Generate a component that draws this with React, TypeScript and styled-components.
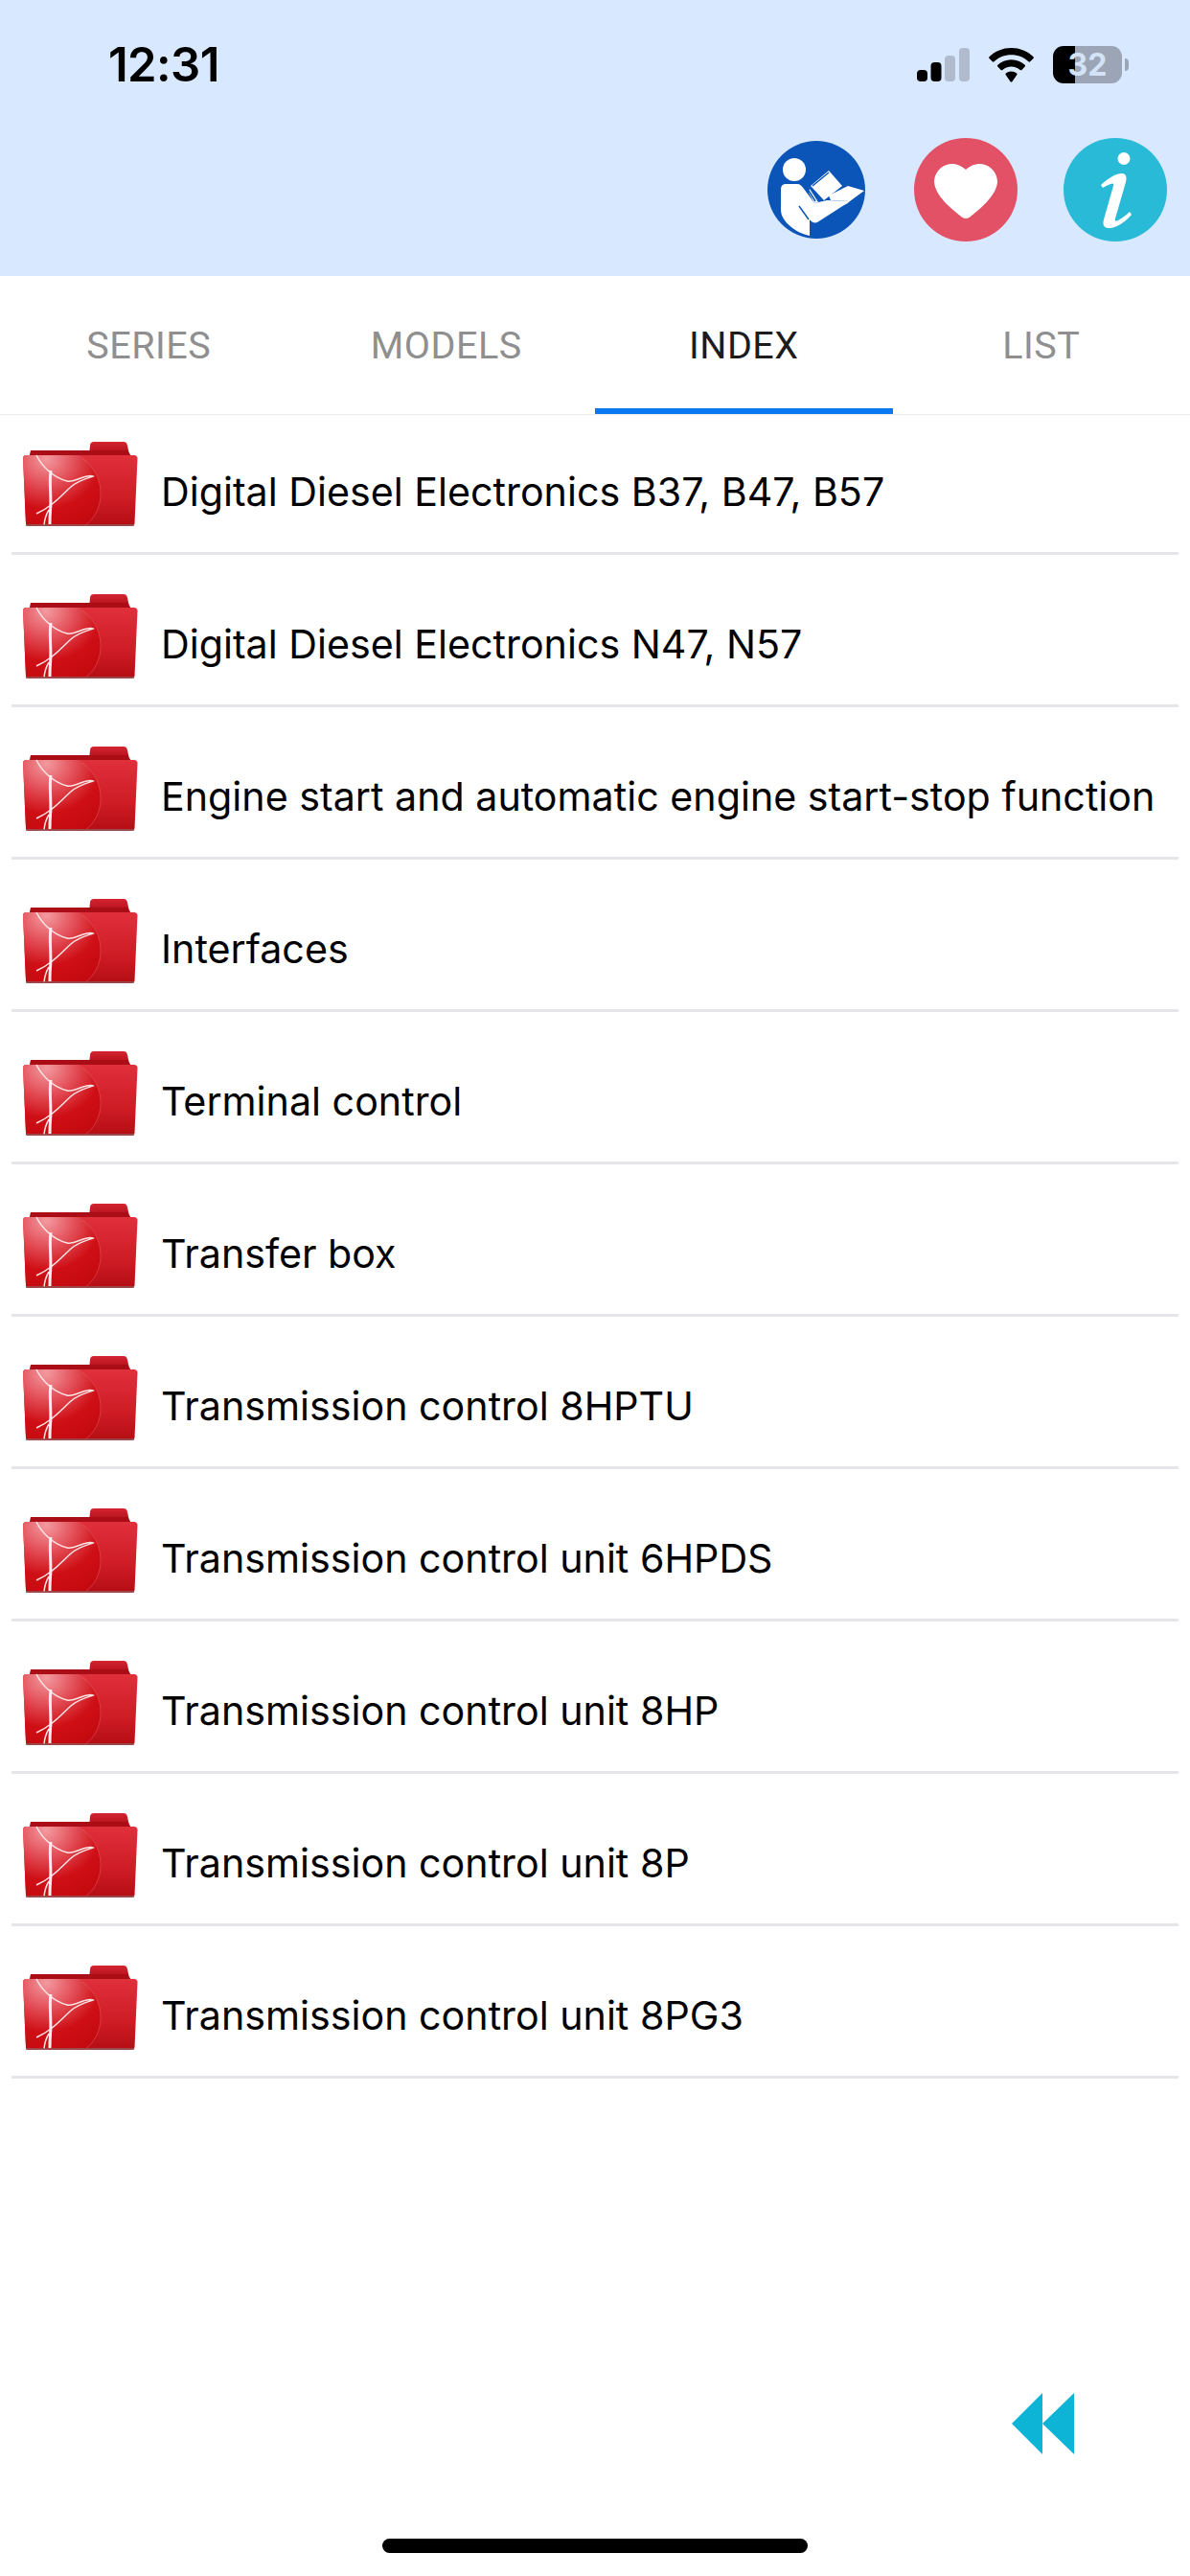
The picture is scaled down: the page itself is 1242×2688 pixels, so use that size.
import { createGlobalStyle } from "styled-components";
import styled from "styled-components";

const GlobalStyle = createGlobalStyle`
  * { box-sizing: border-box; }
  html, body { margin: 0; padding: 0; background: #fff; }
`;

const Page = styled.div`
  width: 1242px;
  height: 2688px;
  display: flex;
  flex-direction: column;
  background: #fff;
  font-family: Inter, "Liberation Sans", sans-serif;
  overflow: hidden;
`;

const Header = styled.header`
  height: 288px;
  flex: none;
  background: #d8e9ff;
  display: flex;
  flex-direction: column;
`;

const StatusBar = styled.div`
  display: flex;
  align-items: flex-start;
  justify-content: space-between;
  padding: 48px 64px 0 113px;
  height: 144px;
`;

const Clock = styled.span`
  font-size: 49px;
  line-height: 40px;
  font-weight: 600;
  letter-spacing: -0.6px;
  color: #000;
`;

const StatusIcons = styled.div`
  display: flex;
  align-items: center;
  height: 39px;
`;

const Battery = styled.div`
  width: 72px;
  height: 39px;
  margin-left: 20px;
  border-radius: 11px;
  background: linear-gradient(90deg, #000 32%, #9ba5b5 32%);
  color: #d3e2f6;
  font-size: 32px;
  font-weight: 700;
  line-height: 39px;
  text-align: center;
  font-family: Inter, sans-serif;
`;

const BatteryNub = styled.div`
  width: 4px;
  height: 13px;
  margin-left: 3px;
  border-radius: 0 4px 4px 0;
  background: #9ba5b5;
`;

const Actions = styled.div`
  display: flex;
  justify-content: flex-end;
  align-items: center;
  height: 108px;
  padding-right: 24px;
`;

const RoundIcon = styled.svg<{ $ml: number }>`
  display: block;
  margin-left: ${(p) => p.$ml}px;
`;

const Tabs = styled.nav`
  display: flex;
  height: 145px;
  flex: none;
  border-bottom: 1px solid #ececec;
`;

const Tab = styled.div<{ $active?: boolean }>`
  flex: 1;
  display: flex;
  align-items: center;
  justify-content: center;
  padding-top: 6px;
  font-family: Roboto, sans-serif;
  font-size: 39.5px;
  letter-spacing: 0.5px;
  color: ${(p) => (p.$active ? "#1c1c1c" : "#8f8f8f")};
  border-bottom: 6px solid ${(p) => (p.$active ? "#0a78f0" : "transparent")};
`;

const List = styled.ul`
  list-style: none;
  margin: 0;
  padding: 0 12px;
  flex: 1;
`;

const Row = styled.li`
  height: 159px;
  display: flex;
  align-items: flex-end;
  gap: 24px;
  padding: 0 0 26px 12px;
  border-bottom: 3px solid #e5e5ea;
  &:first-child {
    height: 146px;
  }
`;

const RowLabel = styled.span`
  font-size: 41.2px;
  line-height: 50px;
  margin-bottom: 12px;
  color: #000;
  white-space: nowrap;
`;

const Footer = styled.div`
  height: 199px;
  flex: none;
  display: flex;
  flex-direction: column;
  align-items: center;
`;

const BackRow = styled.div`
  width: 100%;
  display: flex;
  justify-content: flex-end;
  padding-right: 121px;
  padding-top: 8px;
`;

const HomeBar = styled.div`
  width: 444px;
  height: 15px;
  margin-top: 88px;
  border-radius: 8px;
  background: #000;
`;

const ITEMS = [
  "Digital Diesel Electronics B37, B47, B57",
  "Digital Diesel Electronics N47, N57",
  "Engine start and automatic engine start-stop function",
  "Interfaces",
  "Terminal control",
  "Transfer box",
  "Transmission control 8HPTU",
  "Transmission control unit 6HPDS",
  "Transmission control unit 8HP",
  "Transmission control unit 8P",
  "Transmission control unit 8PG3",
];

const TABS = ["SERIES", "MODELS", "INDEX", "LIST"];

function SignalIcon() {
  return (
    <svg width="55" height="35" viewBox="0 0 55 35">
      <rect x="0" y="23" width="11" height="12" rx="4" fill="#000" />
      <rect x="14.500" y="15" width="11" height="20" rx="4" fill="#000" />
      <rect x="29" y="8" width="11" height="27" rx="4" fill="#b0bccd" />
      <rect x="44" y="0" width="11" height="35" rx="4" fill="#b0bccd" />
    </svg>
  );
}

function WifiIcon() {
  return (
    <svg width="47" height="36" viewBox="0 0 47 36" style={{ marginLeft: 20 }}>
      <path
        d="M23.500 0C14.500 0 6.500 3.400 0.500 9.200C0 9.700 0 10.400 0.500 10.900L3.800 14.300C4.300 14.800 5 14.800 5.500 14.300C10.300 9.800 16.500 7.200 23.500 7.200C30.500 7.200 36.700 9.800 41.500 14.300C42 14.800 42.700 14.800 43.200 14.300L46.500 10.900C47 10.400 47 9.700 46.500 9.200C40.500 3.400 32.500 0 23.500 0Z"
        fill="#000"
      />
      <path
        d="M23.500 12.200C18 12.200 13 14.300 9.300 17.800C8.800 18.300 8.800 19 9.300 19.500L12.600 22.900C13.100 23.400 13.800 23.400 14.300 22.900C16.800 20.700 20 19.400 23.500 19.400C27 19.400 30.200 20.700 32.700 22.900C33.200 23.400 33.900 23.400 34.400 22.900L37.700 19.500C38.200 19 38.200 18.300 37.700 17.800C34 14.300 29 12.200 23.500 12.200Z"
        fill="#000"
      />
      <path
        d="M23.500 24.500C21.300 24.500 19.300 25.300 17.800 26.600C17.300 27.100 17.300 27.800 17.800 28.300L22.600 35.300C23.100 35.900 23.900 35.900 24.400 35.300L29.200 28.300C29.700 27.800 29.700 27.100 29.200 26.600C27.700 25.300 25.700 24.500 23.500 24.500Z"
        fill="#000"
      />
    </svg>
  );
}

function ReaderIcon() {
  return (
    <RoundIcon $ml={0} width="102" height="102" viewBox="0 0 102 102">
      <circle cx="51" cy="51" r="51" fill="#0b55b8" />
      <circle cx="28" cy="30" r="12" fill="#fff" />
      <path
        d="M19 45H31C34 45 36 47 38 50L49 65L62 62L86 63C84 65 82 66 80 67L52 85C49 86 46 85 44 82V99C34 97 24 91 18 83C15 79 14 75 14 72V51C14 47 16 45 19 45Z"
        fill="#fff"
      />
      <path d="M64 57L84 47L101 52L86 63L66 62Z" fill="#fff" />
      <path d="M33 68L43 82" stroke="#0b55b8" strokeWidth="1.500" fill="none" />
      <path d="M45 47L64 31L78 47L59 62Z" fill="#fff" />
      <path d="M47 47L64 33" stroke="#0b55b8" strokeWidth="1.500" fill="none" />
      <path d="M44 50L53 64L49 65L43 54Z" fill="#fff" />
      <path d="M43 52L50 63" stroke="#0b55b8" strokeWidth="1.500" fill="none" />
    </RoundIcon>
  );
}

function HeartIcon() {
  return (
    <RoundIcon $ml={51} width="108" height="108" viewBox="0 0 108 108">
      <circle cx="54" cy="54" r="54" fill="#e25165" />
      <path
        d="M54 33C47 27 40 26 34 28C25 31 21 39 21 46C22 60 39 74 48 81C52 85 56 85 60 81C69 74 86 60 87 46C87 39 83 31 74 28C68 26 61 27 54 33Z"
        fill="#fff"
      />
    </RoundIcon>
  );
}

function InfoIcon() {
  return (
    <RoundIcon $ml={48} width="108" height="108" viewBox="0 0 108 108">
      <circle cx="54" cy="54" r="54" fill="#29bad8" />
      <circle cx="63" cy="21.500" r="6.500" fill="#fff" />
      <path
        d="M39 49C46 42 56 36 62 37C66 38 66 42 65 46L54 84C53 87 55 87 57 86C62 83 66 80 69 77L71 80C65 87 55 95 46 94C41 93 41 89 42 85L52 50C53 47 51 47 49 48C46 49 43 51 41 52Z"
        fill="#fff"
      />
    </RoundIcon>
  );
}

function FolderIcon() {
  return (
    <svg width="120" height="89" viewBox="0 0 120 89" style={{ flex: "none", display: "block" }}>
      <defs>
        <linearGradient id="folderTab" x1="0" y1="0" x2="0" y2="1">
          <stop offset="0" stopColor="#d42431" />
          <stop offset="1" stopColor="#b0101a" />
        </linearGradient>
        <linearGradient id="folderBody" x1="0" y1="0" x2="0" y2="1">
          <stop offset="0" stopColor="#e0303c" />
          <stop offset="0.6" stopColor="#cf1c25" />
          <stop offset="1" stopColor="#b40d13" />
        </linearGradient>
        <radialGradient id="folderGlobe" cx="0.3" cy="0.05" r="1">
          <stop offset="0" stopColor="#f39aa0" />
          <stop offset="0.35" stopColor="#e4525b" />
          <stop offset="0.7" stopColor="#cf0f16" />
          <stop offset="1" stopColor="#c40a10" />
        </radialGradient>
      </defs>
      <path d="M69 13L70 4C70 1.500 71.500 0 74 0H105C107.500 0 108.500 1.500 109 4L111 13Z" fill="url(#folderTab)" />
      <path d="M6 18L8 9H68L109 9L115 18Z" fill="#ab0d17" />
      <path
        d="M3 14H116C118 14 119.500 15.500 119.500 17L116.500 85C116.500 87 115 88 113 88H6C4 88 3 87 3 85L0 17C0 15.500 1 14 3 14Z"
        fill="url(#folderBody)"
      />
      <path
        d="M3 14H58C72 20 81 38 81 54C81 68 75 80 64 88H6C4 88 3 87 3 85L0 17C0 15.500 1 14 3 14Z"
        fill="url(#folderGlobe)"
      />
      <path d="M62 17C73 25 81 38 81 54C81 68 75 80 64 88" fill="none" stroke="#ee7079" strokeWidth="1" opacity="0.4" />
      <path d="M14 14C19 24 30 37 46 41C54 43 66 33 73 36C68 38 58 40 50 47C40 56 30 68 14 75" fill="none" stroke="#fbe6e6" strokeWidth="1.500" />
      <path d="M29 30C27 42 30 58 28.500 72C28 78 28 82 28 86" fill="none" stroke="#fdf0f0" strokeWidth="3" />
      <path d="M22 87C22.500 81 24 76 27 71" fill="none" stroke="#f8e4e4" strokeWidth="1.500" />
      <path d="M3 87H116" stroke="#8f5c5c" strokeWidth="1.500" />
    </svg>
  );
}

function BackIcon() {
  return (
    <svg width="65" height="64" viewBox="0 0 65 64" style={{ display: "block" }}>
      <path d="M32 0V64L0 32Z" fill="#0eb4d6" />
      <path d="M65 0V64L32 32Z" fill="#0eb4d6" />
    </svg>
  );
}

export default function App() {
  return (
    <Page>
      <GlobalStyle />
      <Header>
        <StatusBar>
          <Clock>12:31</Clock>
          <StatusIcons>
            <SignalIcon />
            <WifiIcon />
            <Battery>32</Battery>
            <BatteryNub />
          </StatusIcons>
        </StatusBar>
        <Actions>
          <ReaderIcon />
          <HeartIcon />
          <InfoIcon />
        </Actions>
      </Header>
      <Tabs>
        {TABS.map((t) => (
          <Tab key={t} $active={t === "INDEX"}>
            {t}
          </Tab>
        ))}
      </Tabs>
      <List>
        {ITEMS.map((item) => (
          <Row key={item}>
            <FolderIcon />
            <RowLabel>{item}</RowLabel>
          </Row>
        ))}
      </List>
      <Footer>
        <BackRow>
          <BackIcon />
        </BackRow>
        <HomeBar />
      </Footer>
    </Page>
  );
}
